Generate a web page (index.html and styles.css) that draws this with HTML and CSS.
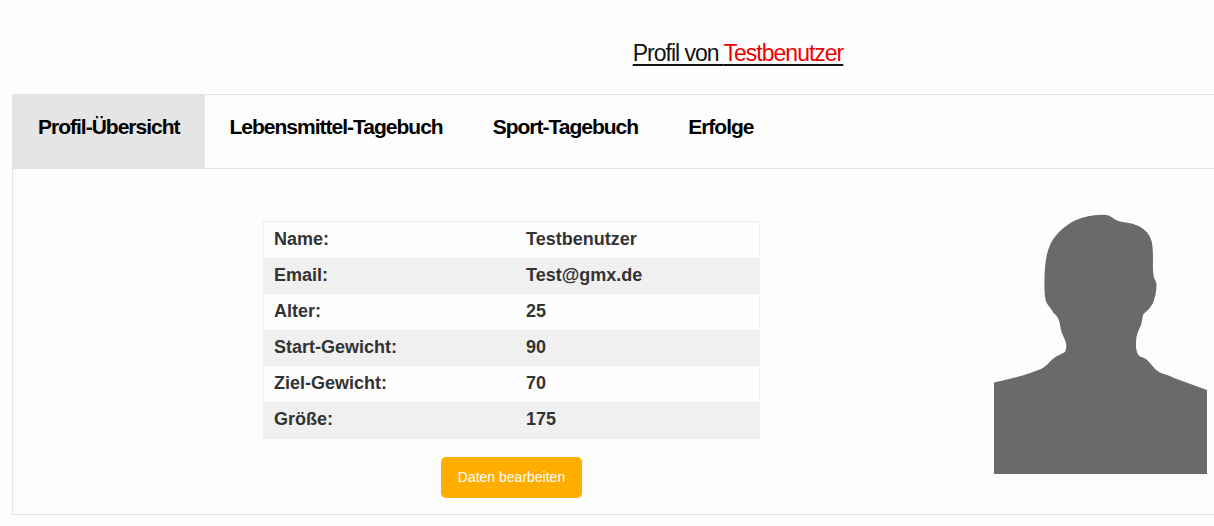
FILE: index.html
```html
<!DOCTYPE html>
<html lang="de">
<head>
<meta charset="utf-8">
<title>Profil von Testbenutzer</title>
<link rel="stylesheet" href="styles.css">
</head>
<body>
<header class="page-header">
  <h1 class="page-title">Profil von <span class="user-name">Testbenutzer</span></h1>
</header>
<main class="panel">
  <nav class="tabs">
    <a class="tab tab-active" href="#uebersicht">Profil-Übersicht</a>
    <a class="tab" href="#lebensmittel">Lebensmittel-Tagebuch</a>
    <a class="tab" href="#sport">Sport-Tagebuch</a>
    <a class="tab" href="#erfolge">Erfolge</a>
  </nav>
  <section class="overview" id="uebersicht">
    <div class="details">
      <table class="data">
        <tbody>
          <tr><th scope="row">Name:</th><td>Testbenutzer</td></tr>
          <tr><th scope="row">Email:</th><td>Test@gmx.de</td></tr>
          <tr><th scope="row">Alter:</th><td>25</td></tr>
          <tr><th scope="row">Start-Gewicht:</th><td>90</td></tr>
          <tr><th scope="row">Ziel-Gewicht:</th><td>70</td></tr>
          <tr><th scope="row">Größe:</th><td>175</td></tr>
        </tbody>
      </table>
      <button class="edit" type="button">Daten bearbeiten</button>
    </div>
    <svg class="avatar" viewBox="0 0 213 260" role="img" aria-label="Profilbild">
      <path d="M0 260V168.500C16 165 33 161 47 155C53 152 56 147 60 144C64 141 68 140 71 138Q73 134 72 129C70.500 124 68 120 67 116C66 111 65.500 107 64 104Q62.500 101 59.500 99C57 94 53 91 51.500 86C50 76 50.500 70 50.500 63C51 52 51.500 40 57 29C62 19 72 11 81 6.500C91 2 102 0 110 .8C117 1 119 5 124 7C130 9 136 8.500 142 11C149 13.500 156 19 158 29C160 41 158 53 159.500 61C159.500 65 162.500 66 162.500 71C162.500 77 161 84 159 89C156 95 151 98 149 101C148 105 148 108 147 111C145 116 143.500 118 142.500 123C142 127 141.500 133 142.500 136C143 139 144 141 147 143C150 143.500 152 145 154 147C159 152 162 157 167 159C172 160.500 176 162 180 164L213 176V260Z"/>
    </svg>
  </section>
</main>
</body>
</html>
```
FILE: styles.css
```css
* {
  box-sizing: border-box;
}

body {
  margin: 0;
  background: #fefefe;
  color: #222;
  font-family: "Liberation Sans", Arial, sans-serif;
}

.page-header {
  padding: 36px 0 24px 262px;
  text-align: center;
}

.page-title {
  display: inline-block;
  margin: 0;
  color: #111;
  font-size: 23px;
  font-weight: 400;
  line-height: 34px;
  letter-spacing: -1px;
  text-decoration: underline;
  text-decoration-thickness: 2px;
  text-underline-offset: 3px;
}

.user-name {
  color: #f00000;
}

.panel {
  margin-left: 12px;
  border: 1px solid #e3e3e3;
  border-right: 0;
  background: #fdfdfd;
}

.tabs {
  display: flex;
  border-bottom: 1px solid #e3e3e3;
}

.tab {
  padding: 16px 25px 25px;
  color: #000;
  font-size: 21px;
  font-weight: 700;
  line-height: 32px;
  letter-spacing: -1px;
  text-decoration: none;
}

.tab-active {
  background: #e5e5e5;
}

.overview {
  display: grid;
  grid-template-columns: 1fr 213px;
  padding: 45px 7px 16px 16px;
}

.details {
  display: flex;
  flex-direction: column;
  align-items: center;
  gap: 18px;
  padding-top: 7px;
}

.data {
  width: 100%;
  max-width: 497px;
  border: 1px solid #efefef;
  border-spacing: 0;
  background: #fefefe;
  color: #333;
  font-size: 18px;
  line-height: 24px;
  table-layout: fixed;
}

.data th,
.data td {
  padding: 5px 10px 7px;
  font-weight: 700;
  text-align: left;
}

.data th {
  width: 252px;
}

.data tr:nth-child(even) {
  background: #f0f0f0;
}

.edit {
  padding: 10px 17px;
  border: 0;
  border-radius: 5px;
  background: #ffae00;
  color: #fff;
  font-family: inherit;
  font-size: 14px;
  line-height: 21px;
}

.avatar {
  width: 213px;
  height: 260px;
  fill: #6a6a6a;
}
```
